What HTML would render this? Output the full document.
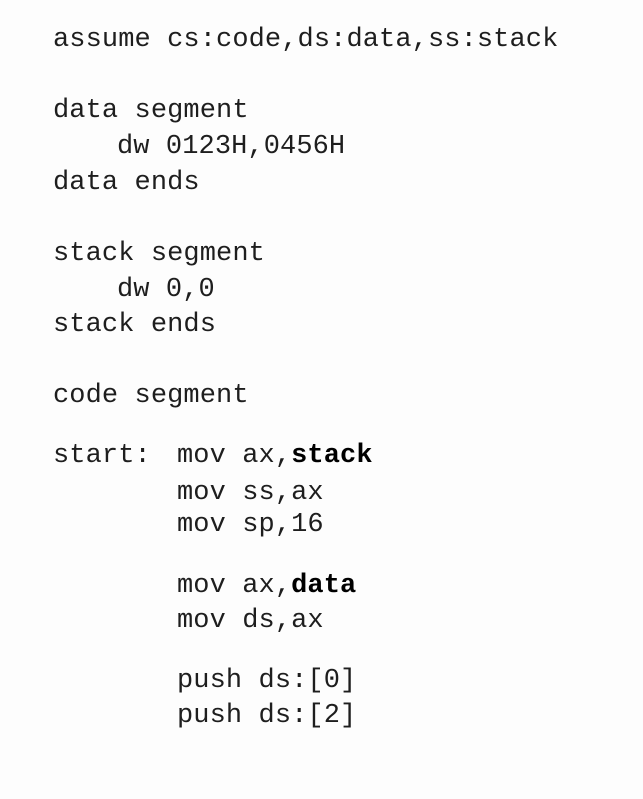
<!DOCTYPE html>
<html><head><meta charset="utf-8"><style>
body{margin:0;width:643px;height:799px;background:#fdfdfd;position:relative;overflow:hidden}
.l{position:absolute;font-family:"Liberation Mono",monospace;font-size:27px;line-height:27px;color:#1e1e1e;white-space:pre;letter-spacing:0.1px}
b{font-weight:bold;color:#000}
</style></head><body>
<div class="l" style="left:53px;top:27px">assume cs:code,ds:data,ss:stack</div>
<div class="l" style="left:53px;top:98px">data segment</div>
<div class="l" style="left:117px;top:134px">dw 0123H,0456H</div>
<div class="l" style="left:53px;top:170px">data ends</div>
<div class="l" style="left:53px;top:241px">stack segment</div>
<div class="l" style="left:117px;top:277px">dw 0,0</div>
<div class="l" style="left:53px;top:312px">stack ends</div>
<div class="l" style="left:53px;top:383px">code segment</div>
<div class="l" style="left:53px;top:443px">start:</div>
<div class="l" style="left:177px;top:443px">mov ax,<b>stack</b></div>
<div class="l" style="left:177px;top:480px">mov ss,ax</div>
<div class="l" style="left:177px;top:512px">mov sp,16</div>
<div class="l" style="left:177px;top:573px">mov ax,<b>data</b></div>
<div class="l" style="left:177px;top:608px">mov ds,ax</div>
<div class="l" style="left:177px;top:668px">push ds:[0]</div>
<div class="l" style="left:177px;top:703px">push ds:[2]</div>
</body></html>
